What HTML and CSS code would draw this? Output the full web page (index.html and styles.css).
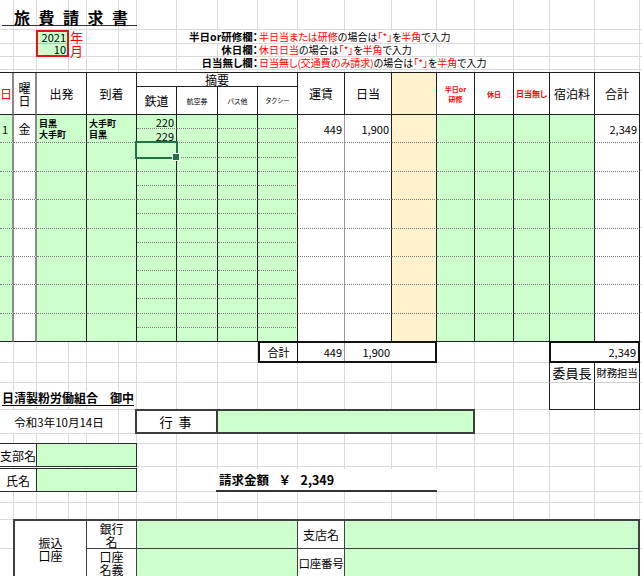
FILE: index.html
```html
<!DOCTYPE html>
<html lang="ja">
<head>
<meta charset="utf-8">
<title>旅費請求書</title>
<link rel="stylesheet" href="styles.css">
</head>
<body>
<div class="sheet">
  <div class="title">旅費請求書</div>

  <div class="ybox"><div class="yv">2021</div><div class="yv">10</div></div>
  <div class="unit yunit">年</div>
  <div class="unit munit">月</div>

  <div class="nlabel n1">半日or研修欄：</div>
  <div class="ntext n1"><span class="red">半日当または研修</span>の場合は<span class="red">「*」</span>を<span class="red">半角</span>で入力</div>
  <div class="nlabel n2">休日欄：</div>
  <div class="ntext n2"><span class="red">休日日当</span>の場合は<span class="red">「*」</span>を<span class="red">半角</span>で入力</div>
  <div class="nlabel n3">日当無し欄：</div>
  <div class="ntext n3"><span class="red">日当無し(交通費のみ請求)</span>の場合は<span class="red">「*」</span>を<span class="red">半角</span>で入力</div>

  <div class="band hdr">
    <div class="gA red">日</div>
    <div class="gB">曜<br>日</div>
    <div class="gC">出発</div>
    <div class="gE">到着</div>
    <div class="gT up">摘要</div>
    <div class="gG dn">鉄道</div>
    <div class="gH dn tiny">航空券</div>
    <div class="gI dn tiny">バス他</div>
    <div class="gJ dn micro">タクシー</div>
    <div class="gK">運賃</div>
    <div class="gL">日当</div>
    <div class="gM or"></div>
    <div class="gN red tiny b">半日or<br>研修</div>
    <div class="gO red tiny b">休日</div>
    <div class="gP red small b">日当無し</div>
    <div class="gQ">宿泊料</div>
    <div class="gR">合計</div>
  </div>

  <div class="band drow d1">
    <div class="gA gn num1">1</div>
    <div class="gB day">金</div>
    <div class="gC gn route">目黒<br>大手町</div>
    <div class="gE gn route">大手町<br>目黒</div>
    <div class="gG gn up">220</div><div class="gH gn up"></div><div class="gI gn up"></div><div class="gJ gn up"></div>
    <div class="gG gn dn">229</div><div class="gH gn dn"></div><div class="gI gn dn"></div><div class="gJ gn dn"></div>
    <div class="gK">449</div><div class="gL">1,900</div><div class="gM or"></div>
    <div class="gN gn"></div><div class="gO gn"></div><div class="gP gn"></div><div class="gQ gn"></div>
    <div class="gR">2,349</div>
  </div>

  <div class="band drow d2">
    <div class="gA gn"></div><div class="gB"></div><div class="gC gn"></div><div class="gE gn"></div>
    <div class="gG gn up"></div><div class="gH gn up"></div><div class="gI gn up"></div><div class="gJ gn up"></div>
    <div class="gG gn dn"></div><div class="gH gn dn"></div><div class="gI gn dn"></div><div class="gJ gn dn"></div>
    <div class="gK"></div><div class="gL"></div><div class="gM or"></div>
    <div class="gN gn"></div><div class="gO gn"></div><div class="gP gn"></div><div class="gQ gn"></div><div class="gR"></div>
  </div>

  <div class="band drow d3">
    <div class="gA gn"></div><div class="gB"></div><div class="gC gn"></div><div class="gE gn"></div>
    <div class="gG gn up"></div><div class="gH gn up"></div><div class="gI gn up"></div><div class="gJ gn up"></div>
    <div class="gG gn dn"></div><div class="gH gn dn"></div><div class="gI gn dn"></div><div class="gJ gn dn"></div>
    <div class="gK"></div><div class="gL"></div><div class="gM or"></div>
    <div class="gN gn"></div><div class="gO gn"></div><div class="gP gn"></div><div class="gQ gn"></div><div class="gR"></div>
  </div>

  <div class="band drow d4">
    <div class="gA gn"></div><div class="gB"></div><div class="gC gn"></div><div class="gE gn"></div>
    <div class="gG gn up"></div><div class="gH gn up"></div><div class="gI gn up"></div><div class="gJ gn up"></div>
    <div class="gG gn dn"></div><div class="gH gn dn"></div><div class="gI gn dn"></div><div class="gJ gn dn"></div>
    <div class="gK"></div><div class="gL"></div><div class="gM or"></div>
    <div class="gN gn"></div><div class="gO gn"></div><div class="gP gn"></div><div class="gQ gn"></div><div class="gR"></div>
  </div>

  <div class="band drow d5">
    <div class="gA gn"></div><div class="gB"></div><div class="gC gn"></div><div class="gE gn"></div>
    <div class="gG gn up"></div><div class="gH gn up"></div><div class="gI gn up"></div><div class="gJ gn up"></div>
    <div class="gG gn dn"></div><div class="gH gn dn"></div><div class="gI gn dn"></div><div class="gJ gn dn"></div>
    <div class="gK"></div><div class="gL"></div><div class="gM or"></div>
    <div class="gN gn"></div><div class="gO gn"></div><div class="gP gn"></div><div class="gQ gn"></div><div class="gR"></div>
  </div>

  <div class="band drow d6">
    <div class="gA gn"></div><div class="gB"></div><div class="gC gn"></div><div class="gE gn"></div>
    <div class="gG gn up"></div><div class="gH gn up"></div><div class="gI gn up"></div><div class="gJ gn up"></div>
    <div class="gG gn dn"></div><div class="gH gn dn"></div><div class="gI gn dn"></div><div class="gJ gn dn"></div>
    <div class="gK"></div><div class="gL"></div><div class="gM or"></div>
    <div class="gN gn"></div><div class="gO gn"></div><div class="gP gn"></div><div class="gQ gn"></div><div class="gR"></div>
  </div>

  <div class="band drow d7">
    <div class="gA gn"></div><div class="gB"></div><div class="gC gn"></div><div class="gE gn"></div>
    <div class="gG gn up"></div><div class="gH gn up"></div><div class="gI gn up"></div><div class="gJ gn up"></div>
    <div class="gG gn dn"></div><div class="gH gn dn"></div><div class="gI gn dn"></div><div class="gJ gn dn"></div>
    <div class="gK"></div><div class="gL"></div><div class="gM or"></div>
    <div class="gN gn"></div><div class="gO gn"></div><div class="gP gn"></div><div class="gQ gn"></div><div class="gR"></div>
  </div>

  <div class="band drow d8">
    <div class="gA gn"></div><div class="gB"></div><div class="gC gn"></div><div class="gE gn"></div>
    <div class="gG gn up"></div><div class="gH gn up"></div><div class="gI gn up"></div><div class="gJ gn up"></div>
    <div class="gG gn dn"></div><div class="gH gn dn"></div><div class="gI gn dn"></div><div class="gJ gn dn"></div>
    <div class="gK"></div><div class="gL"></div><div class="gM or"></div>
    <div class="gN gn"></div><div class="gO gn"></div><div class="gP gn"></div><div class="gQ gn"></div><div class="gR"></div>
  </div>

  <div class="sel"></div>

  <div class="sumbox">
    <div class="lbl">合計</div>
    <div class="val sep">449</div>
    <div class="val">1,900</div>
    <div class="val"></div>
  </div>
  <div class="totbox">2,349</div>

  <div class="role chair">委員長</div>
  <div class="role fin">財務担当</div>
  <div class="sign chair"></div>
  <div class="sign fin"></div>

  <div class="addressee">日清製粉労働組合　御中</div>
  <div class="date">令和3年10月14日</div>

  <div class="event">
    <div class="lbl">行事</div>
    <div class="val"></div>
  </div>

  <div class="field branch">
    <div class="lbl">支部名</div>
    <div class="val"></div>
  </div>
  <div class="field person">
    <div class="lbl center">氏名</div>
    <div class="val"></div>
  </div>

  <div class="claim"><span>請求金額</span><span>￥</span><span>2,349</span></div>

  <div class="bank">
    <div class="lab">振込<br>口座</div>
    <div class="key">銀行<br>名</div>
    <div class="val"></div>
    <div class="key">支店名</div>
    <div class="val end"></div>
    <div class="key last">口座<br>名義</div>
    <div class="val last"></div>
    <div class="key last narrow">口座番号</div>
    <div class="val last end"></div>
  </div>
</div>
</body>
</html>
```

FILE: styles.css
```css
:root {
  --gl: #dadada;
  --green: #ccffcc;
  --orange: #fff2cc;
  --line: #1f1f1f;
  --cols: 14px 23px 32px 18px 32px 18px 40px 41px 40px 40px 47px 47px 45px 38px 39px 36px 45px 45px;
}

* { box-sizing: border-box; }

body {
  margin: 0;
  background: #fff;
  color: #000;
  font-family: "Noto Sans CJK JP", "Noto Sans", sans-serif;
  font-feature-settings: "palt";
}

.sheet {
  width: 642px;
  height: 576px;
  overflow: hidden;
  display: grid;
  grid-template-columns: var(--cols) 2px;
  grid-template-rows: 30px 14px 13px 15px 15px 28px repeat(16, 14.1875px) 21px 20px 27px 24px 10px 23px 2px 23px 11px 17px 29px 29px;
  background-color: #fff;
  background-image:
    linear-gradient(to right,
      transparent 13px, var(--gl) 13px 14px, transparent 14px 36px, var(--gl) 36px 37px,
      transparent 37px 68px, var(--gl) 68px 69px, transparent 69px 86px, var(--gl) 86px 87px,
      transparent 87px 118px, var(--gl) 118px 119px, transparent 119px 136px, var(--gl) 136px 137px,
      transparent 137px 176px, var(--gl) 176px 177px, transparent 177px 217px, var(--gl) 217px 218px,
      transparent 218px 257px, var(--gl) 257px 258px, transparent 258px 297px, var(--gl) 297px 298px,
      transparent 298px 344px, var(--gl) 344px 345px, transparent 345px 391px, var(--gl) 391px 392px,
      transparent 392px 436px, var(--gl) 436px 437px, transparent 437px 474px, var(--gl) 474px 475px,
      transparent 475px 513px, var(--gl) 513px 514px, transparent 514px 549px, var(--gl) 549px 550px,
      transparent 550px 594px, var(--gl) 594px 595px, transparent 595px 639px, var(--gl) 639px 640px,
      transparent 640px),
    linear-gradient(to bottom,
      transparent 29px, var(--gl) 29px 30px, transparent 30px 43px, var(--gl) 43px 44px,
      transparent 44px 56px, var(--gl) 56px 57px, transparent 57px 69px, var(--gl) 69px 70px,
      transparent 70px 142px, var(--gl) 142px 143px, transparent 143px 170px, var(--gl) 170px 171px,
      transparent 171px 199px, var(--gl) 199px 200px, transparent 200px 227px, var(--gl) 227px 228px,
      transparent 228px 256px, var(--gl) 256px 257px, transparent 257px 284px, var(--gl) 284px 285px,
      transparent 285px 312px, var(--gl) 312px 313px, transparent 313px 341px, var(--gl) 341px 342px,
      transparent 342px 362px, var(--gl) 362px 363px, transparent 363px 382px, var(--gl) 382px 383px,
      transparent 383px 409px, var(--gl) 409px 410px, transparent 410px 433px, var(--gl) 433px 434px,
      transparent 434px 443px, var(--gl) 443px 444px, transparent 444px 466px, var(--gl) 466px 467px,
      transparent 467px 491px, var(--gl) 491px 492px, transparent 492px 502px, var(--gl) 502px 503px,
      transparent 503px 519px, var(--gl) 519px 520px, transparent 520px 548px, var(--gl) 548px 549px,
      transparent 549px);
}

.red { color: #ff0000; }

/* ---------- title area ---------- */
.title {
  grid-column: 1 / 7;
  grid-row: 1;
  align-self: start;
  height: 26px;
  margin-left: 2px;
  padding: 9px 0 0 12px;
  border-bottom: 1px solid #333;
  font-size: 16px;
  line-height: 16px;
  font-weight: bold;
  letter-spacing: 8.5px;
  white-space: nowrap;
}

.ybox {
  grid-column: 3;
  grid-row: 2 / 4;
  margin-left: -1px;
  border: 2px solid #ee1111;
  background: var(--green);
  display: grid;
  grid-template-rows: 1fr 1fr;
}
.yv {
  font-size: 11px;
  line-height: 11px;
  padding-right: 1px;
  display: flex;
  align-items: center;
  justify-content: flex-end;
}
.yv:first-child { border-bottom: 1px solid #e6a8a8; }

.unit {
  grid-column: 4;
  color: #ff0000;
  font-size: 13px;
  line-height: 12px;
  padding-left: 1px;
  align-self: center;
}
.yunit { grid-row: 2; }
.munit { grid-row: 3; }

.nlabel, .ntext {
  font-size: 10px;
  line-height: 12px;
  background: #fff;
  white-space: nowrap;
  align-self: start;
  margin-top: 1px;
}
.nlabel {
  grid-column: 5 / 10;
  justify-self: end;
  font-weight: bold;
  font-size: 10.5px;
}
.ntext {
  grid-column: 10 / 18;
  justify-self: start;
  padding-left: 1px;
}
.n1 { grid-row: 2; }
.n2 { grid-row: 3; margin-top: 0; }
.n3 { grid-row: 4; margin-top: 0; }

/* ---------- table bands ---------- */
.band {
  grid-column: 1 / 19;
  display: grid;
  grid-template-columns: var(--cols);
}
.band > div {
  grid-row: 1 / 3;
  display: flex;
  align-items: center;
  border-right: 1px solid var(--line);
  white-space: nowrap;
  overflow: hidden;
}
.band > .up { grid-row: 1; }
.band > .dn { grid-row: 2; }
.band > .gA, .band > .gB { border-right: 2px solid #8a8a8a; }

.gA { grid-column: 1; }
.gB { grid-column: 2; }
.gC { grid-column: 3 / 5; }
.gE { grid-column: 5 / 7; }
.gT { grid-column: 7 / 11; }
.gG { grid-column: 7; }
.gH { grid-column: 8; }
.gI { grid-column: 9; }
.gJ { grid-column: 10; }
.gK { grid-column: 11; }
.gL { grid-column: 12; }
.gM { grid-column: 13; }
.gN { grid-column: 14; }
.gO { grid-column: 15; }
.gP { grid-column: 16; }
.gQ { grid-column: 17; }
.gR { grid-column: 18; }

.gn { background: var(--green); }
.or { background: var(--orange); }

.hdr {
  grid-row: 5 / 7;
  grid-template-rows: 14px 28px;
  border-top: 1px solid var(--line);
}
.hdr > div {
  background: #fff;
  border-bottom: 1px solid var(--line);
  justify-content: center;
  text-align: center;
  font-size: 12px;
  line-height: 13px;
}
.hdr > .up { line-height: 12px; }
.hdr > .or { background: var(--orange); }
.hdr > .tiny { font-size: 7px; line-height: 10px; }
.hdr > .micro { font-size: 6.5px; }
.hdr > .small { font-size: 8px; }
.hdr > .b { font-weight: bold; }

.drow { grid-template-rows: 1fr 1fr; }
.drow > div {
  background: #fff;
  border-bottom: 1px dotted #7a7a7a;
  justify-content: flex-end;
  padding-right: 2px;
  font-size: 11px;
  line-height: 12px;
}
.drow > .gn { background: var(--green); }
.drow > .or { background: var(--orange); }
.drow > .gK { border-right-color: #9a9a9a; }
.d8 > div:not(.up) { border-bottom: 1px solid var(--line); }

.d1 { grid-row: 7 / 9; }
.d2 { grid-row: 9 / 11; }
.d3 { grid-row: 11 / 13; }
.d4 { grid-row: 13 / 15; }
.d5 { grid-row: 15 / 17; }
.d6 { grid-row: 17 / 19; }
.d7 { grid-row: 19 / 21; }
.d8 { grid-row: 21 / 23; }

.drow > .num1 { padding-right: 4px; }
.drow > .day { justify-content: center; padding: 0; font-size: 12px; }
.drow > .route {
  justify-content: flex-start;
  align-items: flex-start;
  padding: 3px 0 0 2px;
  font-size: 9px;
  line-height: 11px;
  font-weight: bold;
}

.sel {
  grid-column: 7;
  grid-row: 9;
  margin: -2px -1px -1px -2px;
  border: 2px solid #217346;
  position: relative;
  z-index: 2;
}
.sel::after {
  content: "";
  position: absolute;
  right: -4px;
  bottom: -4px;
  width: 6px;
  height: 6px;
  background: #217346;
  border: 1px solid #fff;
}

/* ---------- totals / approval ---------- */
.sumbox {
  grid-column: 10 / 14;
  grid-row: 23;
  margin-top: -1px;
  border: 2px solid #111;
  background: #fff;
  display: grid;
  grid-template-columns: 38px 47px 47px 1fr;
  font-size: 11px;
}
.sumbox > div {
  display: flex;
  align-items: center;
  justify-content: flex-end;
  padding-right: 2px;
}
.sumbox .lbl {
  justify-content: center;
  padding: 0;
  border-right: 1px solid #111;
}
.sumbox .sep { border-right: 1px solid #a0a0a0; }

.totbox {
  grid-column: 17 / 19;
  grid-row: 23;
  margin: -1px 0 0 -1px;
  border: 2px solid #111;
  background: #fff;
  display: flex;
  align-items: center;
  justify-content: flex-end;
  padding-right: 2px;
  font-size: 11px;
}

.role {
  grid-row: 24;
  background: #fff;
  border-right: 1px solid var(--line);
  border-bottom: 1px solid #d0d0d0;
  display: flex;
  align-items: center;
  justify-content: center;
  white-space: nowrap;
}
.sign {
  grid-row: 25;
  background: #fff;
  border-right: 1px solid var(--line);
  border-bottom: 1px solid var(--line);
}
.role.chair, .sign.chair {
  grid-column: 17;
  margin-left: -1px;
  border-left: 1px solid var(--line);
}
.role.fin, .sign.fin { grid-column: 18; }
.role.chair { font-size: 13px; }
.role.fin { font-size: 10.5px; letter-spacing: -0.3px; }

/* ---------- lower form ---------- */
.addressee {
  grid-column: 1 / 12;
  grid-row: 25;
  justify-self: start;
  align-self: center;
  margin: 3px 0 0 2px;
  background: #fff;
  font-size: 12px;
  line-height: 14px;
  font-weight: bold;
  border-bottom: 1px solid #000;
  white-space: nowrap;
}

.date {
  grid-column: 1 / 6;
  grid-row: 26;
  margin: 0 1px 1px 0;
  background: #fff;
  display: flex;
  align-items: center;
  justify-content: center;
  font-size: 11.5px;
  white-space: nowrap;
}

.event {
  grid-column: 7 / 15;
  grid-row: 26;
  margin-left: -2px;
  margin-top: -1px;
  border: 2px solid #3c3c3c;
  display: grid;
  grid-template-columns: 81px 1fr;
}
.event .lbl {
  background: #fff;
  border-right: 2px solid #3c3c3c;
  display: flex;
  align-items: center;
  justify-content: center;
  font-size: 13px;
  letter-spacing: 6px;
  padding-left: 4px;
}
.event .val { background: var(--green); }

.field {
  grid-column: 1 / 7;
  margin-top: -1px;
  border: 1px solid #2a2a2a;
  border-left: 0;
  display: grid;
  grid-template-columns: 37px 1fr;
}
.field.branch { grid-row: 28; }
.field.person { grid-row: 30; }
.field .lbl {
  background: #fff;
  border-right: 1px solid #2a2a2a;
  display: flex;
  align-items: center;
  justify-content: flex-end;
  font-size: 12px;
  white-space: nowrap;
  overflow: hidden;
}
.field .lbl.center { justify-content: center; }
.field .val { background: var(--green); }

.claim {
  grid-column: 9 / 14;
  grid-row: 30;
  margin-left: -2px;
  border-bottom: 2px solid #333;
  background: #fff;
  display: flex;
  align-items: center;
  gap: 11px;
  padding: 0 0 1px 3px;
  font-size: 12.5px;
  font-weight: bold;
  white-space: nowrap;
}

.bank {
  grid-column: 2 / 19;
  grid-row: 33 / 35;
  margin: -1px 0 0 -1px;
  border: 2px solid #404040;
  border-bottom: 0;
  background: #fff;
  display: grid;
  grid-template-columns: 72px 50px 161px 47px 1fr;
  grid-template-rows: 28px 1fr;
}
.bank > div {
  border-right: 1px solid #404040;
  display: flex;
  align-items: center;
  justify-content: center;
  text-align: center;
  font-size: 12px;
  line-height: 13px;
  white-space: nowrap;
}
.bank .lab { grid-row: 1 / 3; padding-bottom: 2px; }
.bank .key, .bank .val { border-bottom: 1px solid #404040; }
.bank .key.last, .bank .val.last { border-bottom: 0; }
.bank .key.last { align-items: flex-start; padding-top: 1px; }
.bank .val { background: var(--green); }
.bank .val.end { border-right: 0; }
.bank .key.narrow { align-items: center; padding-top: 0; font-size: 11.5px; letter-spacing: -0.3px; }
```
